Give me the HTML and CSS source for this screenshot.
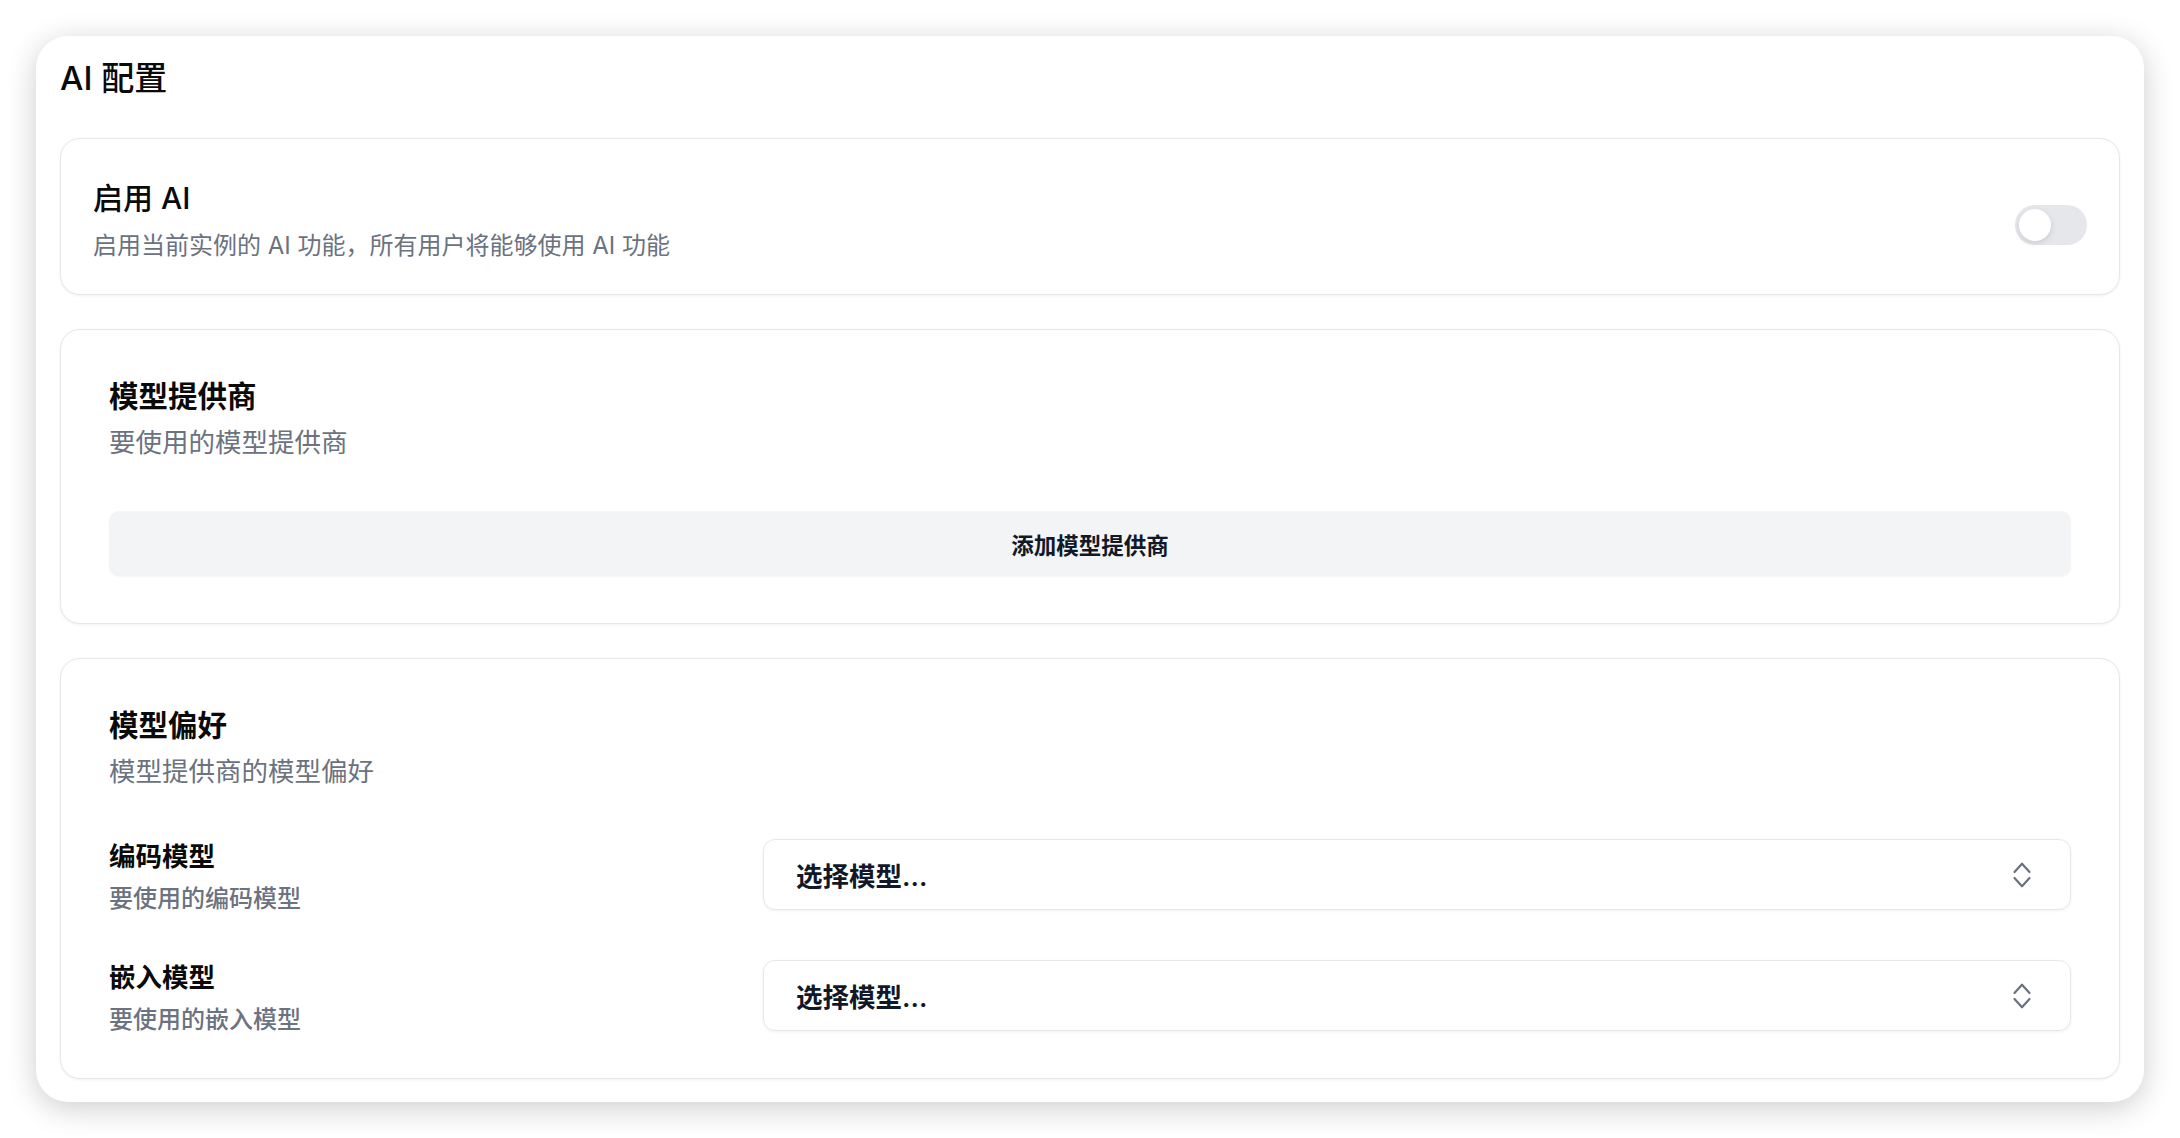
FILE: index.html
```html
<!DOCTYPE html>
<html lang="zh-CN">

<head>
	<meta charset="UTF-8">
	<meta name="viewport" content="width=device-width, initial-scale=1.0">
	<link rel="stylesheet" href="styles.css">
	<title>AI 配置</title>
</head>

<body>
	<div class="panel">
		<h1 class="panel-title">AI 配置</h1>

		<div class="card toggle-card">
			<div>
				<h3 class="toggle-title">启用 AI</h3>
				<p class="toggle-desc">启用当前实例的 AI 功能，所有用户将能够使用 AI 功能</p>
			</div>
			<div class="switch">
				<span class="knob"></span>
			</div>
		</div>

		<div class="card section">
			<h2 class="section-title">模型提供商</h2>
			<p class="section-desc">要使用的模型提供商</p>
			<button class="add-button">添加模型提供商</button>
		</div>

		<div class="card section prefs">
			<h2 class="section-title">模型偏好</h2>
			<p class="section-desc">模型提供商的模型偏好</p>

			<div class="rows">
				<div class="row">
					<div class="row-text">
						<div class="row-label">编码模型</div>
						<div class="row-desc">要使用的编码模型</div>
					</div>
					<div class="select">
						<span>选择模型...</span>
						<svg width="36" height="36" viewBox="0 0 24 24" fill="none" stroke="#6b7280" stroke-width="1.5" stroke-linecap="round" stroke-linejoin="round">
							<path d="M7 10 12 4.5 17 10" />
							<path d="M7 14 12 19.5 17 14" />
						</svg>
					</div>
				</div>
				<div class="row">
					<div class="row-text">
						<div class="row-label">嵌入模型</div>
						<div class="row-desc">要使用的嵌入模型</div>
					</div>
					<div class="select">
						<span>选择模型...</span>
						<svg width="36" height="36" viewBox="0 0 24 24" fill="none" stroke="#6b7280" stroke-width="1.5" stroke-linecap="round" stroke-linejoin="round">
							<path d="M7 10 12 4.5 17 10" />
							<path d="M7 14 12 19.5 17 14" />
						</svg>
					</div>
				</div>
			</div>
		</div>
	</div>
</body>

</html>
```

FILE: styles.css
```css
body {
	margin: 0;
	background-color: #ffffff;
	font-family: Inter, "Noto Sans CJK SC", sans-serif;
	color: #0a0a0a;
}

.panel {
	margin: 36px;
	height: 1066px;
	box-sizing: border-box;
	padding: 20px 24px 24px;
	background-color: #ffffff;
	border-radius: 32px;
	box-shadow: 0 6px 30px rgba(0, 0, 0, 0.2);
	display: flex;
	flex-direction: column;
	gap: 34px;
}

.panel-title {
	margin: 0 0 4px;
	font-size: 33px;
	line-height: 44px;
	font-weight: 500;
}

.card {
	border: 1px solid #e5e7eb;
	border-radius: 20px;
	background-color: #ffffff;
	box-shadow: 0 1px 3px rgba(0, 0, 0, 0.06);
}

.toggle-card {
	display: flex;
	justify-content: space-between;
	align-items: center;
	padding: 39px 32px 30px;
}

.toggle-title {
	margin: 0 0 10px;
	font-size: 30px;
	line-height: 40px;
	font-weight: 500;
}

.toggle-desc {
	margin: 0;
	font-size: 24px;
	line-height: 36px;
	color: #6b7280;
}

.switch {
	width: 72px;
	height: 40px;
	margin-top: 8px;
	box-sizing: border-box;
	padding: 4px;
	border-radius: 20px;
	background-color: #e5e7eb;
	display: flex;
	align-items: center;
}

.knob {
	width: 32px;
	height: 32px;
	border-radius: 50%;
	background-color: #ffffff;
	box-shadow: 0 2px 6px rgba(0, 0, 0, 0.12);
}

.section {
	padding: 46px 48px 47px;
}

.section-title {
	margin: 0;
	font-size: 29.5px;
	line-height: 40px;
	font-weight: 700;
}

.section-desc {
	margin: 8px 0 0;
	font-size: 26.5px;
	line-height: 36px;
	color: #6b7280;
}

.add-button {
	display: block;
	width: 100%;
	height: 65px;
	margin-top: 51px;
	border: none;
	border-radius: 10px;
	background-color: #f3f4f6;
	font-family: inherit;
	font-size: 22.5px;
	font-weight: 600;
	color: #111827;
	box-shadow: 0 1px 2px rgba(0, 0, 0, 0.04);
}

.prefs {
	padding-bottom: 46px;
}

.rows {
	margin-top: 50px;
	display: flex;
	flex-direction: column;
	gap: 49px;
}

.row {
	display: grid;
	grid-template-columns: 1fr 2fr;
	align-items: start;
}

.row-text {
	padding-top: 2px;
}

.row-label {
	font-size: 26.5px;
	line-height: 30px;
	font-weight: 700;
}

.row-desc {
	margin-top: 16px;
	font-size: 24px;
	line-height: 24px;
	color: #6b7280;
	font-weight: 500;
}

.select {
	height: 71px;
	box-sizing: border-box;
	padding: 0 30px 0 32px;
	border: 1px solid #e5e7eb;
	border-radius: 12px;
	box-shadow: 0 1px 3px rgba(0, 0, 0, 0.06);
	display: flex;
	justify-content: space-between;
	align-items: center;
	font-size: 26.5px;
	font-weight: 600;
	color: #111827;
}
```
